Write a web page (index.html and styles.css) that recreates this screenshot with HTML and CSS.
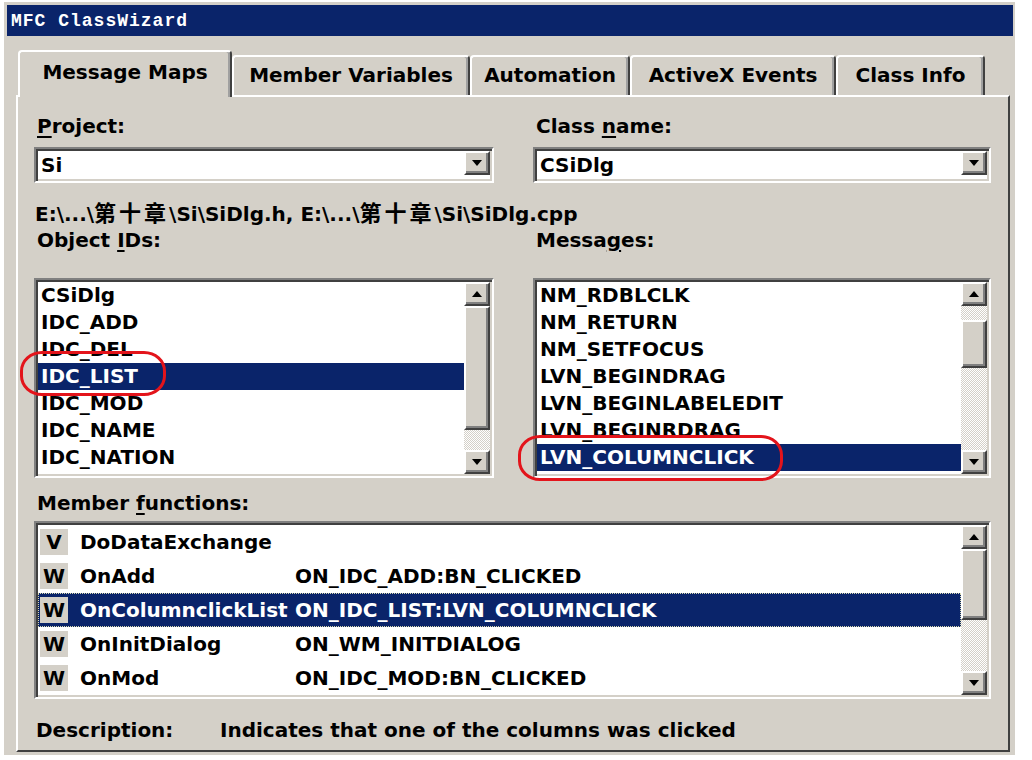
FILE: index.html
```html
<!DOCTYPE html>
<html lang="en">
<head>
  <meta charset="UTF-8">
  <title>MFC ClassWizard</title>
  <link rel="stylesheet" href="styles.css">
</head>
<body>
  <div class="window">
    <div class="titlebar">MFC ClassWizard</div>

    <div class="tabs">
      <div class="tab active tab-maps">Message Maps</div>
      <div class="tab tab-vars">Member Variables</div>
      <div class="tab tab-auto">Automation</div>
      <div class="tab tab-activex">ActiveX Events</div>
      <div class="tab tab-info">Class Info</div>
    </div>

    <div class="panel">
      <div class="fields">
        <div class="label"><u>P</u>roject:</div>
        <div class="label">Class <u>n</u>ame:</div>

        <div class="combo">
          <div class="combo-text">Si</div>
          <div class="btn"><svg width="10" height="6" viewBox="0 0 10 6"><polygon points="0,0 10,0 5,6" fill="#000"/></svg></div>
        </div>
        <div class="combo">
          <div class="combo-text">CSiDlg</div>
          <div class="btn"><svg width="10" height="6" viewBox="0 0 10 6"><polygon points="0,0 10,0 5,6" fill="#000"/></svg></div>
        </div>

        <div class="path">E:\...\<span class="cjk">第十章</span>\Si\SiDlg.h, E:\...\<span class="cjk">第十章</span>\Si\SiDlg.cpp</div>

        <div class="label">Object <u>I</u>Ds:</div>
        <div class="label">Messa<u>g</u>es:</div>

        <div class="listbox">
          <div class="items">
            <div class="item">CSiDlg</div>
            <div class="item">IDC_ADD</div>
            <div class="item">IDC_DEL</div>
            <div class="item selected">IDC_LIST</div>
            <div class="item">IDC_MOD</div>
            <div class="item">IDC_NAME</div>
            <div class="item">IDC_NATION</div>
          </div>
          <div class="scrollbar">
            <div class="btn"><svg width="10" height="6" viewBox="0 0 10 6"><polygon points="0,6 10,6 5,0" fill="#000"/></svg></div>
            <div class="thumb thumb-ids"></div>
            <div class="track"></div>
            <div class="btn"><svg width="10" height="6" viewBox="0 0 10 6"><polygon points="0,0 10,0 5,6" fill="#000"/></svg></div>
          </div>
        </div>

        <div class="listbox">
          <div class="items">
            <div class="item">NM_RDBLCLK</div>
            <div class="item">NM_RETURN</div>
            <div class="item">NM_SETFOCUS</div>
            <div class="item">LVN_BEGINDRAG</div>
            <div class="item">LVN_BEGINLABELEDIT</div>
            <div class="item">LVN_BEGINRDRAG</div>
            <div class="item selected">LVN_COLUMNCLICK</div>
          </div>
          <div class="scrollbar">
            <div class="btn"><svg width="10" height="6" viewBox="0 0 10 6"><polygon points="0,6 10,6 5,0" fill="#000"/></svg></div>
            <div class="track track-top"></div>
            <div class="thumb thumb-msgs"></div>
            <div class="track"></div>
            <div class="btn"><svg width="10" height="6" viewBox="0 0 10 6"><polygon points="0,0 10,0 5,6" fill="#000"/></svg></div>
          </div>
        </div>
      </div>

      <div class="label label-funcs">Member <u>f</u>unctions:</div>
      <div class="listbox funcs">
        <div class="items">
          <div class="func">
            <span class="kind">V</span><span class="fname">DoDataExchange</span><span class="fmap"></span>
          </div>
          <div class="func">
            <span class="kind">W</span><span class="fname">OnAdd</span><span class="fmap">ON_IDC_ADD:BN_CLICKED</span>
          </div>
          <div class="func selected">
            <span class="kind">W</span><span class="fname">OnColumnclickList</span><span class="fmap">ON_IDC_LIST:LVN_COLUMNCLICK</span>
          </div>
          <div class="func">
            <span class="kind">W</span><span class="fname">OnInitDialog</span><span class="fmap">ON_WM_INITDIALOG</span>
          </div>
          <div class="func">
            <span class="kind">W</span><span class="fname">OnMod</span><span class="fmap">ON_IDC_MOD:BN_CLICKED</span>
          </div>
        </div>
        <div class="scrollbar">
          <div class="btn"><svg width="10" height="6" viewBox="0 0 10 6"><polygon points="0,6 10,6 5,0" fill="#000"/></svg></div>
          <div class="thumb thumb-funcs"></div>
          <div class="track"></div>
          <div class="btn"><svg width="10" height="6" viewBox="0 0 10 6"><polygon points="0,0 10,0 5,6" fill="#000"/></svg></div>
        </div>
      </div>

      <div class="description">
        <span class="desc-label">Description:</span>
        <span>Indicates that one of the columns was clicked</span>
      </div>
    </div>
  </div>

  <!-- red marks drawn over the screenshot -->
  <div class="mark mark-ids"></div>
  <div class="mark mark-msgs"></div>
</body>
</html>
```

FILE: styles.css
```css
body {
  margin: 0;
  background: #fff;
  font-family: "DejaVu Sans", "Noto Sans CJK SC", sans-serif;
  font-weight: bold;
  font-size: 20px;
  color: #000;
}

.window {
  width: 1012px;
  height: 754px;
  margin: 1px 0 0 3px;
  padding: 3px 2px 0 3px;
  box-sizing: border-box;
  background: #d4d0c8;
  border-left: 1px solid #fff;
  border-top: 1px solid #fff;
}

.titlebar {
  height: 31px;
  padding: 5px 0 0 4px;
  box-sizing: border-box;
  background: #0a246a;
  color: #fff;
  font-family: "Liberation Mono", monospace;
  font-size: 18px;
  letter-spacing: 1px;
  line-height: 22px;
}

/* tabs */
.tabs {
  display: flex;
  align-items: flex-end;
  height: 45px;
  margin: 14px 0 0 11px;
  position: relative;
  z-index: 1;
}

.tab {
  height: 40px;
  box-sizing: border-box;
  border: 2px solid;
  border-color: #fff #404040 transparent #fff;
  border-bottom: none;
  border-radius: 4px 4px 0 0;
  box-shadow: inset -2px 0 #a0a0a0;
  text-align: center;
  line-height: 36px;
}

.tab.active {
  height: 47px;
  margin-bottom: -2px;
  background: #d4d0c8;
  line-height: 40px;
}

.tab-maps { width: 214px; }
.tab-vars { width: 238px; }
.tab-auto { width: 160px; }
.tab-activex { width: 206px; }
.tab-info { width: 149px; }

.panel {
  width: 994px;
  height: 657px;
  margin-left: 9px;
  padding: 17px 0 0 16px;
  box-sizing: border-box;
  border-top: 2px solid #fff;
  border-left: 2px solid #fff;
  border-right: 2px solid #404040;
  border-bottom: 2px solid #404040;
}

.fields {
  display: grid;
  grid-template-columns: 460px 458px;
  column-gap: 39px;
}

.label {
  height: 24px;
  line-height: 24px;
  padding-left: 3px;
}

.label u {
  text-decoration-thickness: 2px;
  text-underline-offset: 3px;
}

.combo {
  height: 36px;
  margin-top: 9px;
  padding: 2px;
  display: flex;
  box-sizing: border-box;
  background: #fff;
  border: 2px solid;
  border-color: #808080 #fff #fff #808080;
  box-shadow: inset 2px 2px #404040, inset -2px -2px #d4d0c8;
}

.combo-text {
  flex: 1;
  padding: 0 0 0 3px;
  line-height: 28px;
}

.combo .btn {
  width: 26px;
}

.path {
  grid-column: 1 / 3;
  height: 24px;
  margin: 16px 0 5px;
  line-height: 24px;
  padding-left: 1px;
  white-space: nowrap;
}

.cjk {
  font-family: "Noto Sans CJK SC", sans-serif;
  font-size: 22px;
  letter-spacing: 3px;
}

.btn {
  height: 24px;
  display: flex;
  align-items: center;
  justify-content: center;
  box-sizing: border-box;
  background: #d4d0c8;
  border: 2px solid;
  border-color: #fff #404040 #404040 #fff;
  box-shadow: inset -2px -2px #808080;
}

/* list boxes */
.listbox {
  height: 200px;
  margin-top: 26px;
  padding: 2px;
  display: flex;
  box-sizing: border-box;
  background: #fff;
  border: 2px solid;
  border-color: #808080 #fff #fff #808080;
  box-shadow: inset 2px 2px #404040, inset -2px -2px #d4d0c8;
}

.items {
  flex: 1;
  overflow: hidden;
}

.item {
  height: 27px;
  line-height: 27px;
  padding-left: 3px;
  white-space: nowrap;
}

.selected {
  background: #0a246a;
  color: #fff;
}

.scrollbar {
  width: 26px;
  display: flex;
  flex-direction: column;
}

.thumb {
  box-sizing: border-box;
  background: #d4d0c8;
  border: 2px solid;
  border-color: #fff #404040 #404040 #fff;
  box-shadow: inset -2px -2px #808080;
}

.track {
  flex: 1;
  background: repeating-conic-gradient(#fff 0 25%, #d4d0c8 0 50%) 0 0 / 2px 2px;
}

.track-top {
  flex: 0 0 14px;
}

.thumb-ids { height: 124px; }
.thumb-msgs { height: 48px; }
.thumb-funcs { height: 71px; }

/* member functions */
.label-funcs {
  margin-top: 13px;
}

.funcs {
  width: 957px;
  height: 178px;
  margin-top: 6px;
}

.func {
  height: 34px;
  display: flex;
  align-items: center;
  white-space: nowrap;
}

.func.selected {
  outline: 1px dotted #d8d8b0;
  outline-offset: -1px;
}

.kind {
  width: 28px;
  height: 26px;
  margin-left: 2px;
  background: #d4d0c8;
  color: #000;
  text-align: center;
  line-height: 26px;
}

.fname {
  width: 215px;
  margin-left: 12px;
}

.description {
  display: flex;
  height: 24px;
  margin-top: 19px;
  line-height: 24px;
  padding-left: 2px;
}

.desc-label {
  width: 184px;
}

/* annotation marks */
.mark {
  position: absolute;
  border: 3px solid #e3141b;
  border-radius: 22px / 20px;
}

.mark-ids {
  left: 20px;
  top: 351px;
  width: 140px;
  height: 39px;
}

.mark-msgs {
  left: 518px;
  top: 435px;
  width: 259px;
  height: 40px;
}
```
